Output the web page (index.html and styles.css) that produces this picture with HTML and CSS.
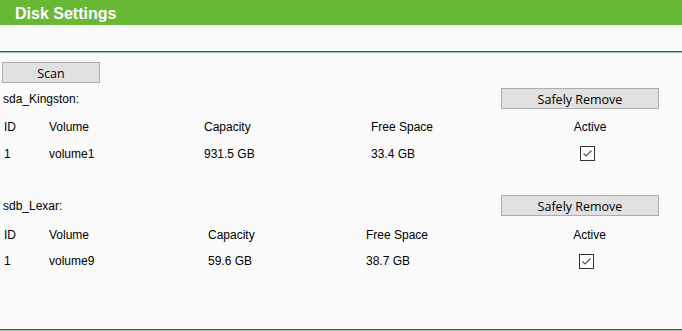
FILE: index.html
```html
<html>
<head>
<link rel="stylesheet" href="styles.css">
</head>
<body>
<div class="title-bar">Disk Settings</div>
<div class="rule"></div>

<div class="content">
<button class="btn btn-scan">Scan</button>

<div class="disk">
<div class="disk-head">
<span class="disk-name">sda_Kingston:</span>
<button class="btn btn-remove">Safely Remove</button>
</div>
<div class="vol-row cols-a head">
<span>ID</span><span>Volume</span><span>Capacity</span><span>Free Space</span><span class="c">Active</span>
</div>
<div class="vol-row cols-a">
<span>1</span><span>volume1</span><span>931.5 GB</span><span>33.4 GB</span>
<span class="c"><span class="check"><svg width="13" height="13" viewBox="0 0 13 13"><path d="M2.5 6.5 L5 9 L10.5 3.5" fill="none" stroke="#555" stroke-width="1.2"/></svg></span></span>
</div>
</div>

<div class="disk disk-2">
<div class="disk-head">
<span class="disk-name">sdb_Lexar:</span>
<button class="btn btn-remove">Safely Remove</button>
</div>
<div class="vol-row cols-b head">
<span>ID</span><span>Volume</span><span>Capacity</span><span>Free Space</span><span class="c">Active</span>
</div>
<div class="vol-row cols-b">
<span>1</span><span>volume9</span><span>59.6 GB</span><span>38.7 GB</span>
<span class="c"><span class="check"><svg width="13" height="13" viewBox="0 0 13 13"><path d="M2.5 6.5 L5 9 L10.5 3.5" fill="none" stroke="#555" stroke-width="1.2"/></svg></span></span>
</div>
</div>
</div>

<div class="rule rule-bottom"></div>
</body>
</html>
```

FILE: styles.css
```css
body {
margin: 0;
background-color: #fafafa;
font-family: "Liberation Sans", Arial, sans-serif;
font-size: 12px;
color: #000;
}

.title-bar {
height: 23px;
padding-top: 2px;
line-height: 24px;
background-color: #67b834;
color: white;
font-size: 16px;
font-weight: bold;
padding-left: 15px;
}

.rule {
margin-top: 26px;
height: 1px;
border-top: 1px solid #2e6b3e;
background-color: #9fc3a6;
}

.rule-bottom {
margin-top: 55px;
}

.content {
padding: 9px 0 0 2px;
}

.btn {
display: block;
margin: 0;
height: 21px;
padding: 1px 0 0 0;
background-color: #e1e1e1;
border: 1px solid #adadad;
font-family: "Open Sans", "Segoe UI", sans-serif;
font-size: 12.5px;
color: #000;
}

.btn-scan {
width: 98px;
}

.btn-remove {
width: 158px;
}

.disk {
width: 657px;
margin-top: 5px;
}

.disk-2 {
margin-top: 28px;
}

.disk-head {
display: flex;
justify-content: space-between;
align-items: center;
height: 21px;
}

.disk-name {
padding-left: 1px;
}

.vol-row {
display: grid;
height: 26px;
align-items: center;
padding-left: 2px;
}

.vol-row.head {
margin-top: 5px;
}

.cols-a + .cols-a {
height: 27px;
}

.cols-b.head {
margin-top: 6px;
}

.cols-a {
grid-template-columns: 45px 155px 167px 150px 138px;
}

.cols-b {
grid-template-columns: 45px 159px 158px 154px 139px;
}

.c {
text-align: center;
}

.check {
display: inline-block;
width: 13px;
height: 13px;
border: 1px solid #333;
background-color: white;
vertical-align: middle;
margin-right: 6px;
}

.check svg {
display: block;
}
```
